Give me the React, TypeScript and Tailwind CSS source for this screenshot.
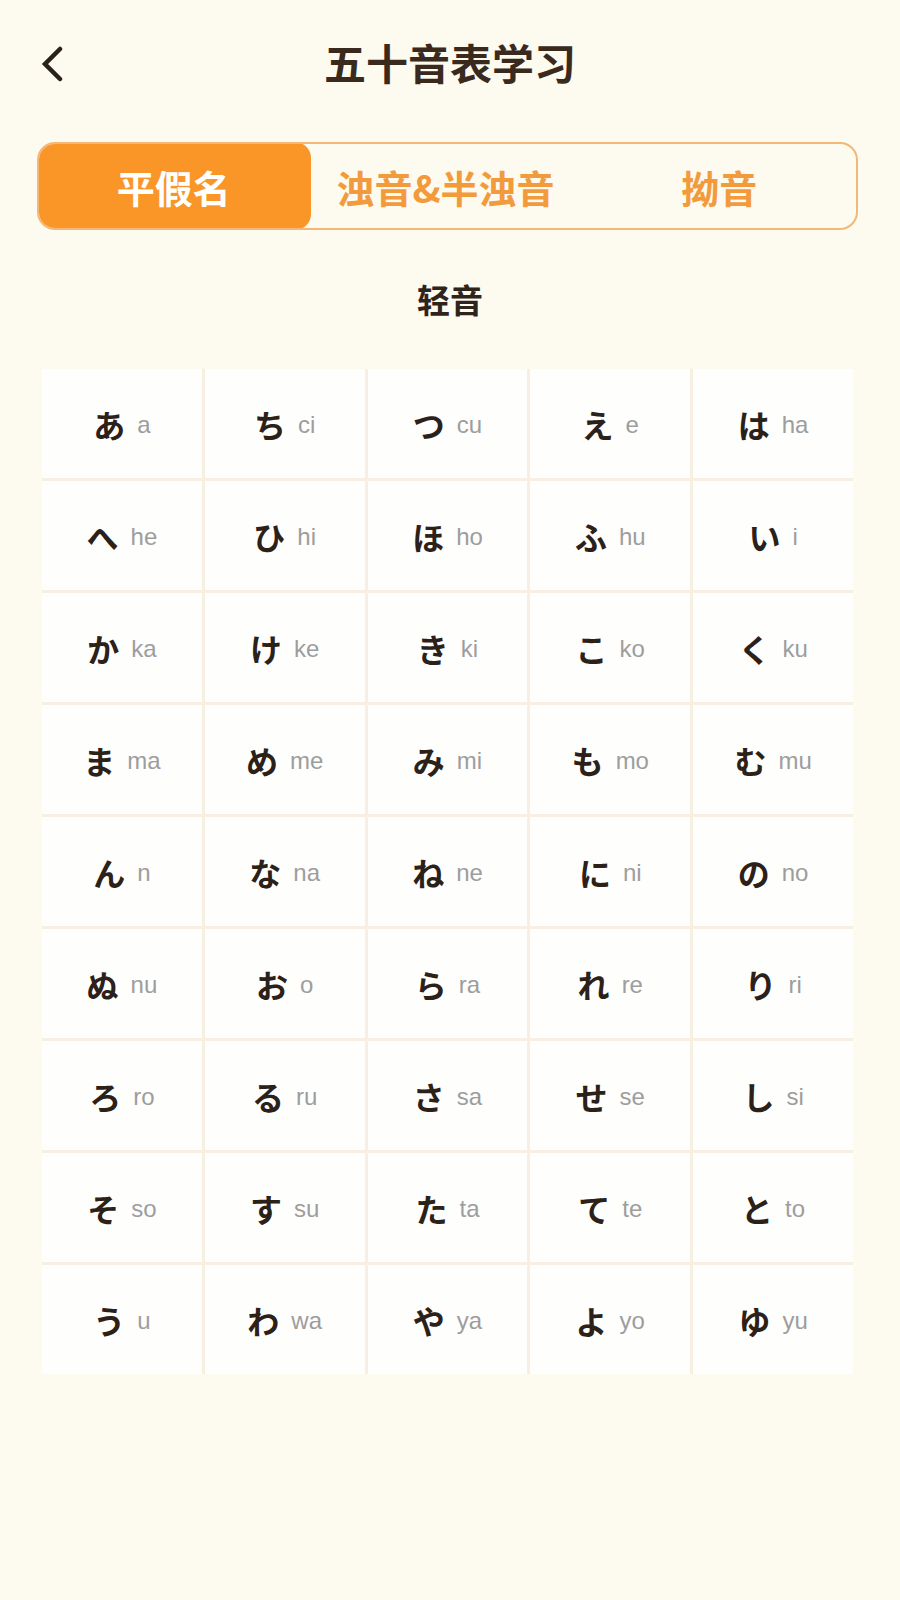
import React from "react";

const KANA: [string, string][] = [
  ["あ", "a"], ["ち", "ci"], ["つ", "cu"], ["え", "e"], ["は", "ha"],
  ["へ", "he"], ["ひ", "hi"], ["ほ", "ho"], ["ふ", "hu"], ["い", "i"],
  ["か", "ka"], ["け", "ke"], ["き", "ki"], ["こ", "ko"], ["く", "ku"],
  ["ま", "ma"], ["め", "me"], ["み", "mi"], ["も", "mo"], ["む", "mu"],
  ["ん", "n"], ["な", "na"], ["ね", "ne"], ["に", "ni"], ["の", "no"],
  ["ぬ", "nu"], ["お", "o"], ["ら", "ra"], ["れ", "re"], ["り", "ri"],
  ["ろ", "ro"], ["る", "ru"], ["さ", "sa"], ["せ", "se"], ["し", "si"],
  ["そ", "so"], ["す", "su"], ["た", "ta"], ["て", "te"], ["と", "to"],
  ["う", "u"], ["わ", "wa"], ["や", "ya"], ["よ", "yo"], ["ゆ", "yu"],
];

export default function App() {
  return (
    <div className="w-[900px] h-[1600px] bg-[#fdfaf0] font-['Noto_Sans_CJK_SC','Noto_Sans_CJK_JP',sans-serif] flex flex-col">
      {/* Header */}
      <div className="grid grid-cols-[1fr_auto_1fr] items-center h-[124px]">
        <div className="pl-[40px] pt-[4px]">
          <svg width="24" height="36" viewBox="0 0 24 36" fill="none">
            <polyline
              points="20,3 5,18 20,33"
              stroke="#2a211a"
              strokeWidth="4.5"
              strokeLinecap="round"
              strokeLinejoin="miter"
            />
          </svg>
        </div>
        <div className="text-[42px] font-bold text-[#3a2a1e] leading-none">五十音表学习</div>
        <div />
      </div>

      {/* Tabs */}
      <div className="mt-[18px] mx-[37px] w-[821px] h-[88px] border-2 border-[#f3b877] rounded-[18px] flex overflow-hidden">
        <div className="flex-1 -m-[2px] bg-[#fa9628] rounded-[16px] flex items-center justify-center text-white text-[38px] font-bold">
          平假名
        </div>
        <div className="flex-1 flex items-center justify-center text-[#f29b3d] text-[38px] font-bold">
          浊音&amp;半浊音
        </div>
        <div className="flex-1 flex items-center justify-center text-[#f29b3d] text-[38px] font-bold">
          拗音
        </div>
      </div>

      {/* Section title */}
      <div className="h-[139px] flex items-center justify-center text-[33px] font-bold text-[#2e241c]">
        轻音
      </div>

      {/* Grid */}
      <div className="mx-[42px] w-[811px] grid grid-cols-5 gap-[3px] bg-[#f9eee2]">
        {KANA.map(([k, r]) => (
          <div key={k} className="h-[109px] bg-[#fefefd] flex items-center justify-center">
            <span className="text-[32px] font-bold text-[#2b2118] font-['Noto_Sans_CJK_JP',sans-serif] leading-none">
              {k}
            </span>
            <span className="ml-[12px] mt-[3px] text-[24px] text-[#9d9d9d] font-['Liberation_Sans',sans-serif] leading-none">
              {r}
            </span>
          </div>
        ))}
      </div>
    </div>
  );
}
